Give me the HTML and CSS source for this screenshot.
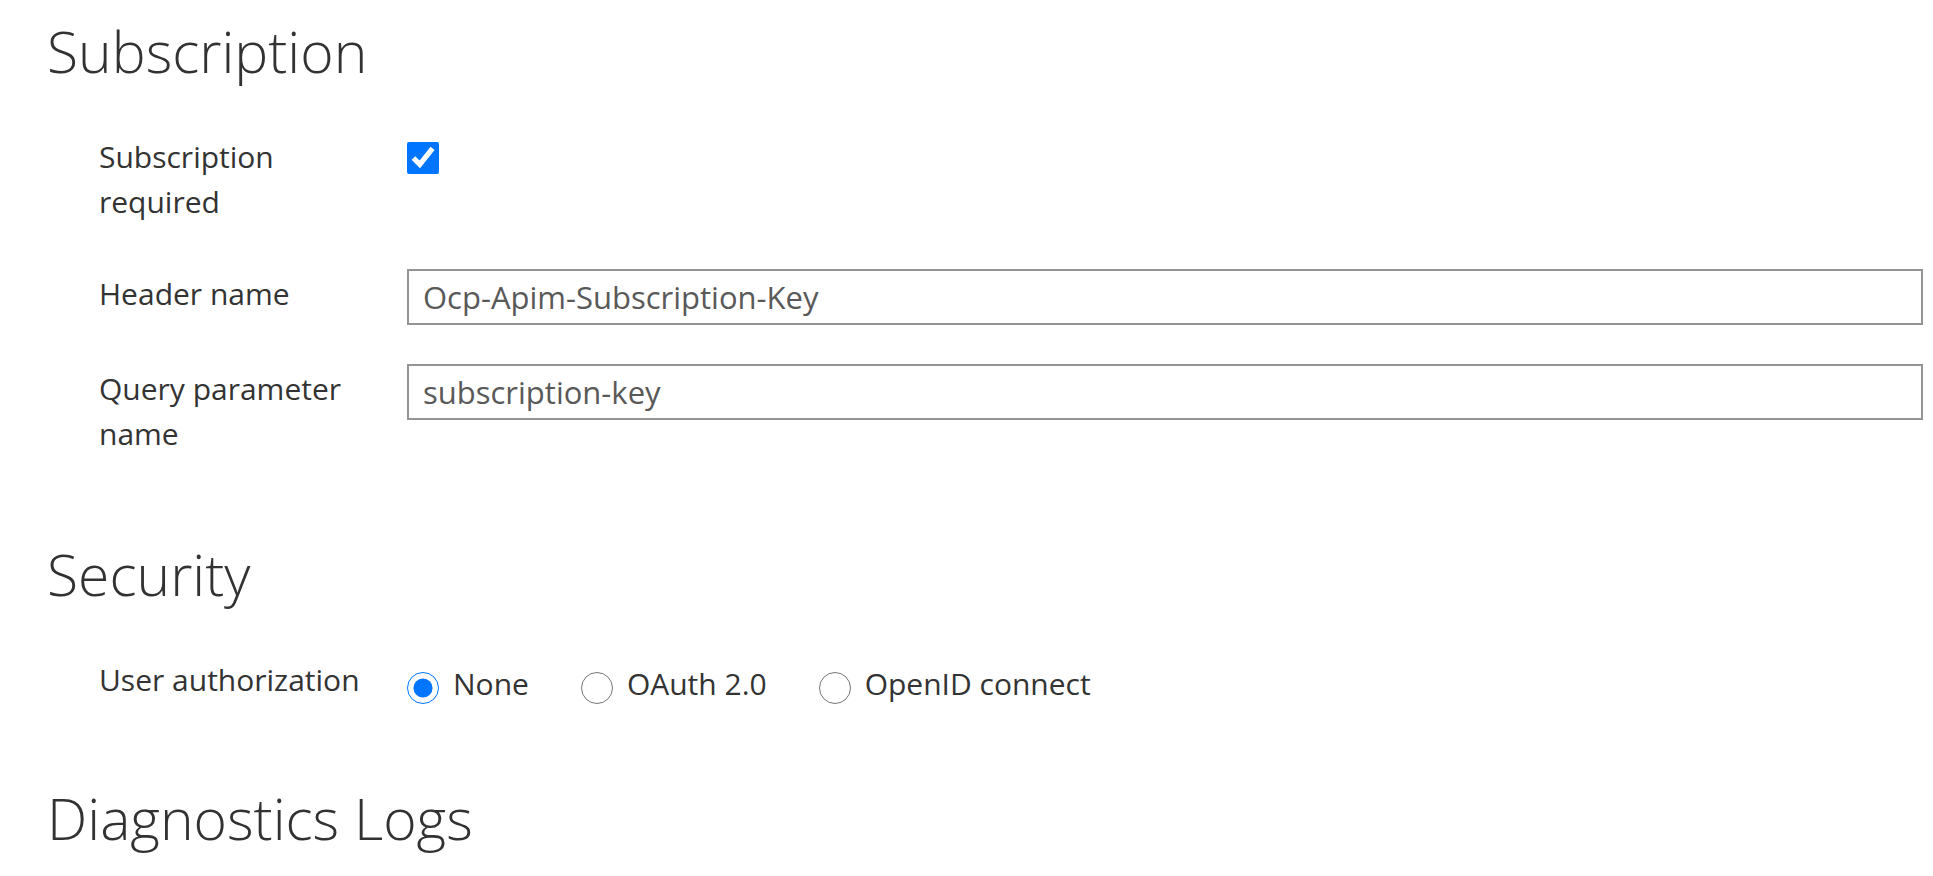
FILE: index.html
```html
<!DOCTYPE html>
<html lang="en">
<head>
<meta charset="utf-8">
<title>API settings</title>
<link rel="stylesheet" href="styles.css">
</head>
<body>
<main class="page">
  <section class="section section-subscription">
    <h2 class="section-title">Subscription</h2>
    <div class="form-row row-check">
      <label class="field-label" for="subreq">Subscription required</label>
      <div class="field-control">
        <input class="checkbox" type="checkbox" id="subreq" checked>
      </div>
    </div>
    <div class="form-row row-header">
      <label class="field-label" for="hname">Header name</label>
      <div class="field-control">
        <input class="text-input" type="text" id="hname" value="Ocp-Apim-Subscription-Key">
      </div>
    </div>
    <div class="form-row">
      <label class="field-label" for="qname">Query parameter name</label>
      <div class="field-control">
        <input class="text-input" type="text" id="qname" value="subscription-key">
      </div>
    </div>
  </section>

  <section class="section section-security">
    <h2 class="section-title">Security</h2>
    <div class="form-row">
      <span class="field-label">User authorization</span>
      <div class="field-control radio-group">
        <label class="radio-option"><input class="radio" type="radio" name="auth" checked><span class="radio-text">None</span></label>
        <label class="radio-option"><input class="radio" type="radio" name="auth"><span class="radio-text">OAuth 2.0</span></label>
        <label class="radio-option"><input class="radio" type="radio" name="auth"><span class="radio-text">OpenID connect</span></label>
      </div>
    </div>
  </section>

  <section class="section">
    <h2 class="section-title">Diagnostics Logs</h2>
  </section>
</main>
</body>
</html>
```

FILE: styles.css
```css
html, body {
  margin: 0;
  padding: 0;
  background: #ffffff;
}

body {
  font-family: "Open Sans", "Noto Sans", "Liberation Sans", sans-serif;
  font-size: 30px;
  line-height: 45px;
  color: #333333;
}

.page {
  padding: 17px 10px 0 47px;
}

.section-title {
  margin: 0 0 46px 0;
  font-size: 57px;
  line-height: 69px;
  font-weight: 350;
  color: #323232;
}

.section-subscription {
  margin-bottom: 84px;
}

.section-security {
  margin-bottom: 78px;
}

.form-row {
  display: grid;
  grid-template-columns: 308px 1fr;
  padding-left: 52px;
  align-items: start;
  margin-bottom: 39px;
}

.form-row:last-child {
  margin-bottom: 0;
}

.row-check {
  margin-bottom: 45px;
}

.field-label {
  padding-top: 2px;
  padding-right: 20px;
  color: #333333;
}

.field-control {
  display: flex;
  align-items: flex-start;
}

.checkbox {
  width: 32px;
  height: 32px;
  margin: 10px 0 0 0;
  accent-color: #0075ff;
}

.text-input {
  box-sizing: border-box;
  width: 100%;
  height: 56px;
  margin: 0;
  padding: 0 14px;
  border: 2px solid #949494;
  border-radius: 0;
  font-family: inherit;
  font-size: 31px;
  color: #595959;
  background: #ffffff;
  outline: none;
}

.radio-group {
  padding-top: 6px;
}

.radio-option {
  display: inline-flex;
  align-items: flex-start;
  margin-right: 52px;
}

.radio {
  width: 32px;
  height: 32px;
  margin: 11px 14px 0 0;
  accent-color: #0075ff;
}

.radio-text {
  color: #333333;
}
```
